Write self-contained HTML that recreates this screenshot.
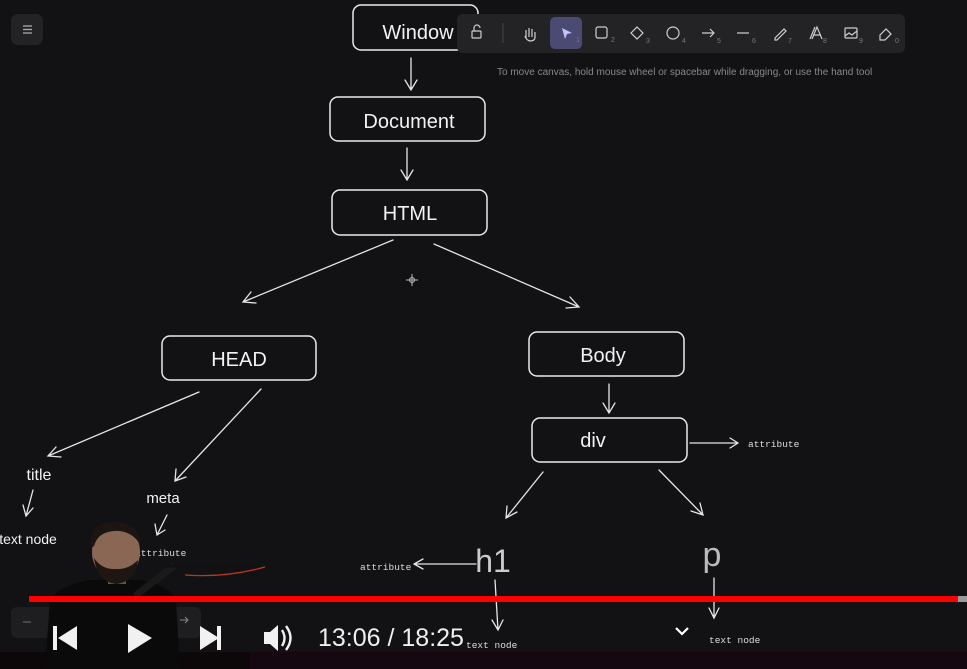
<!DOCTYPE html>
<html><head><meta charset="utf-8">
<style>
html,body{margin:0;padding:0;background:#121114;width:967px;height:669px;overflow:hidden}
svg{display:block}
.t{font-family:"Liberation Sans",sans-serif;fill:#f2f2f2}
</style></head>
<body>
<svg width="967" height="669" viewBox="0 0 967 669" xmlns="http://www.w3.org/2000/svg">
<rect width="967" height="669" fill="#121114"/>
<rect x="11" y="14" width="32" height="31" rx="7" fill="#232326"/>
<g stroke="#aaa" stroke-width="1.3"><line x1="23" y1="26" x2="32" y2="26"/><line x1="23" y1="29.5" x2="32" y2="29.5"/><line x1="23" y1="33" x2="32" y2="33"/></g>

<g fill="none" stroke="#eaeaea" stroke-width="1.5">
<rect x="353" y="5" width="125" height="45" rx="8"/>
<rect x="330" y="97" width="155" height="44" rx="8"/>
<rect x="332" y="190" width="155" height="45" rx="8"/>
<rect x="162" y="336" width="154" height="44" rx="8"/>
<rect x="529" y="332" width="155" height="44" rx="8"/>
<rect x="532" y="418" width="155" height="44" rx="8"/>
</g>
<g class="t" font-size="20" text-anchor="middle" font-family="Liberation Sans">
<text x="418" y="39">Window</text>
<text x="409" y="128">Document</text>
<text x="410" y="220">HTML</text>
<text x="239" y="366">HEAD</text>
<text x="603" y="362">Body</text>
<text x="593" y="447">div</text>
<text x="39" y="480" font-size="16">title</text>
<text x="163" y="503" font-size="15">meta</text>
<text x="28" y="544" font-size="14">text node</text>
<text x="493" y="572" font-size="32" fill="#ccc">h1</text>
<text x="712" y="566" font-size="34" fill="#bbb">p</text>
</g>
<g font-family="Liberation Mono" font-size="9.5" fill="#ddd">
<text x="748" y="447">attribute</text>
<text x="135" y="556">attribute</text>
<text x="360" y="570">attribute</text>
<text x="466" y="648">text node</text>
<text x="709" y="643">text node</text>
</g>

<g fill="none" stroke="#e6e6e6" stroke-width="1.3" stroke-linecap="round">
<path d="M411 58 L411 90 M405 80 L411 90 L417 80"/>
<path d="M407 148 L407 180 M401 170 L407 180 L413 170"/>
<path d="M393 240 L243 302 M251 292 L243 302 L256 303"/>
<path d="M434 244 L579 307 M566 308 L579 307 L570 297"/>
<path d="M609 384 L609 413 M603 403 L609 413 L615 403"/>
<path d="M199 392 L48 456 M56 447 L48 456 L61 457"/>
<path d="M261 389 L175 481 M176 469 L175 481 L186 477"/>
<path d="M33 490 L26 516 M23 505 L26 516 L33 508"/>
<path d="M167 515 L157 535 M155 524 L157 535 L165 530"/>
<path d="M690 443 L738 443 M730 438 L738 443 L730 448"/>
<path d="M543 472 L506 518 M507 506 L506 518 L517 512"/>
<path d="M659 470 L703 515 M691 511 L703 515 L700 503"/>
<path d="M476 564 L414 564 M423 559 L414 564 L423 569"/>
<path d="M495 580 L498 630 M492 620 L498 630 L503 620"/>
<path d="M714 578 L714 618 M709 608 L714 618 L719 608"/>
</g>
<g stroke="#bbb" stroke-width="1" fill="none"><line x1="412" y1="274" x2="412" y2="286"/><line x1="406" y1="280" x2="418" y2="280"/><circle cx="412" cy="280" r="2.5"/></g>

<rect x="457" y="14" width="448" height="39" rx="6" fill="#232326"/>
<rect x="550" y="17" width="32" height="32" rx="5" fill="#4b4a73"/>
<line x1="503" y1="23" x2="503" y2="43" stroke="#444"/>
<g fill="none" stroke="#cfcfcf" stroke-width="1.2">
<rect x="472" y="31" width="9" height="7" rx="1"/><path d="M474 31 v-3 a3 3 0 0 1 6 0"/>
<path d="M526 38 v-8 M529 37 v-9 M532 37 v-8 M535 38 v-6 M525 36 q1 4 5 5 q5 0 5-4"/>
<rect x="596" y="27" width="11" height="11" rx="2"/>
<path d="M637 27 l6 6 l-6 6 l-6 -6 z"/>
<circle cx="673" cy="33" r="6"/>
<path d="M702 33 h12 M710 29 l4 4 l-4 4"/>
<path d="M737 33 h12"/>
<path d="M775 38 l9 -9 l2 2 l-9 9 h-2 z"/>
<path d="M812 39 l5 -12 l5 12 M814 35 h7 M810 39 l5 -12"/>
<rect x="845" y="28" width="12" height="10" rx="1"/><path d="M845 36 l4-3 l3 2 l5-4"/>
<path d="M880 35 l6 -6 l5 5 l-6 6 h-5 z"/>
</g>
<path d="M562 28 l10 5 l-5 1 l-2 5 z" fill="#c5c2ff"/>
<g font-family="Liberation Sans" font-size="7" fill="#777">
<text x="576" y="42">1</text><text x="611" y="42">2</text><text x="646" y="43">3</text><text x="682" y="43">4</text><text x="717" y="43">5</text><text x="752" y="43">6</text><text x="788" y="43">7</text><text x="823" y="43">8</text><text x="859" y="43">9</text><text x="895" y="43">0</text>
</g>
<text x="497" y="75" font-family="Liberation Sans" font-size="10" fill="#888">To move canvas, hold mouse wheel or spacebar while dragging, or use the hand tool</text>

<rect x="11" y="607" width="190" height="31" rx="6" fill="#1e1e21"/>
<line x1="23" y1="622" x2="31" y2="622" stroke="#666" stroke-width="1.2"/>

<rect x="0" y="652" width="967" height="17" fill="#0c0709"/>
<rect x="250" y="652" width="717" height="17" fill="#150810"/>

<path d="M45 669 L50 600 Q60 585 90 580 L140 580 Q170 585 176 600 L180 669 Z" fill="#0a0a0a"/>
<rect x="108" y="568" width="18" height="16" fill="#6e5244"/>
<ellipse cx="116" cy="552" rx="24" ry="28" fill="#8a6654"/>
<path d="M91 548 Q88 522 114 522 Q140 522 141 546 L137 540 Q128 530 114 531 Q98 532 94 546 Z" fill="#1c1512"/>
<path d="M94 558 Q97 582 116 584 Q136 582 138 560 Q128 570 116 569 Q102 570 94 558 Z" fill="#1e1613"/>
<path d="M135 596 L175 565" stroke="#1a1a1a" stroke-width="7"/>
<path d="M158 566 L262 567" stroke="#111" stroke-width="3"/>
<path d="M185 575 Q225 578 265 567" stroke="#b63a1c" stroke-width="1.3" fill="none"/>

<rect x="29" y="596" width="929" height="6" fill="#f00"/>
<rect x="958" y="596" width="9" height="6" fill="#999"/>

<g fill="#f1f1f1">
<rect x="53" y="626" width="4" height="24"/><path d="M77 626 L77 650 L58 638 Z"/>
<path d="M128 624 L152 638 L128 653 Z"/>
<path d="M200 626 L219 638 L200 650 Z"/><rect x="217" y="626" width="4" height="24"/>
<path d="M264 632 h6 l8 -7 v26 l-8 -7 h-6 z"/>
</g>
<g fill="none" stroke="#f1f1f1" stroke-width="2.4"><path d="M282 630 q5 8 0 16"/><path d="M286 626 q9 12 0 24"/></g>
<text x="318" y="646" font-family="Liberation Sans" font-size="25" fill="#eee">13:06 / 18:25</text>
<path d="M676 628 l6 6 l6 -6" fill="none" stroke="#fff" stroke-width="2.2"/>
<path d="M180 620 h8 M185 617 l3 3 l-3 3" stroke="#888" fill="none" stroke-width="1"/>
</svg>
</body></html>
